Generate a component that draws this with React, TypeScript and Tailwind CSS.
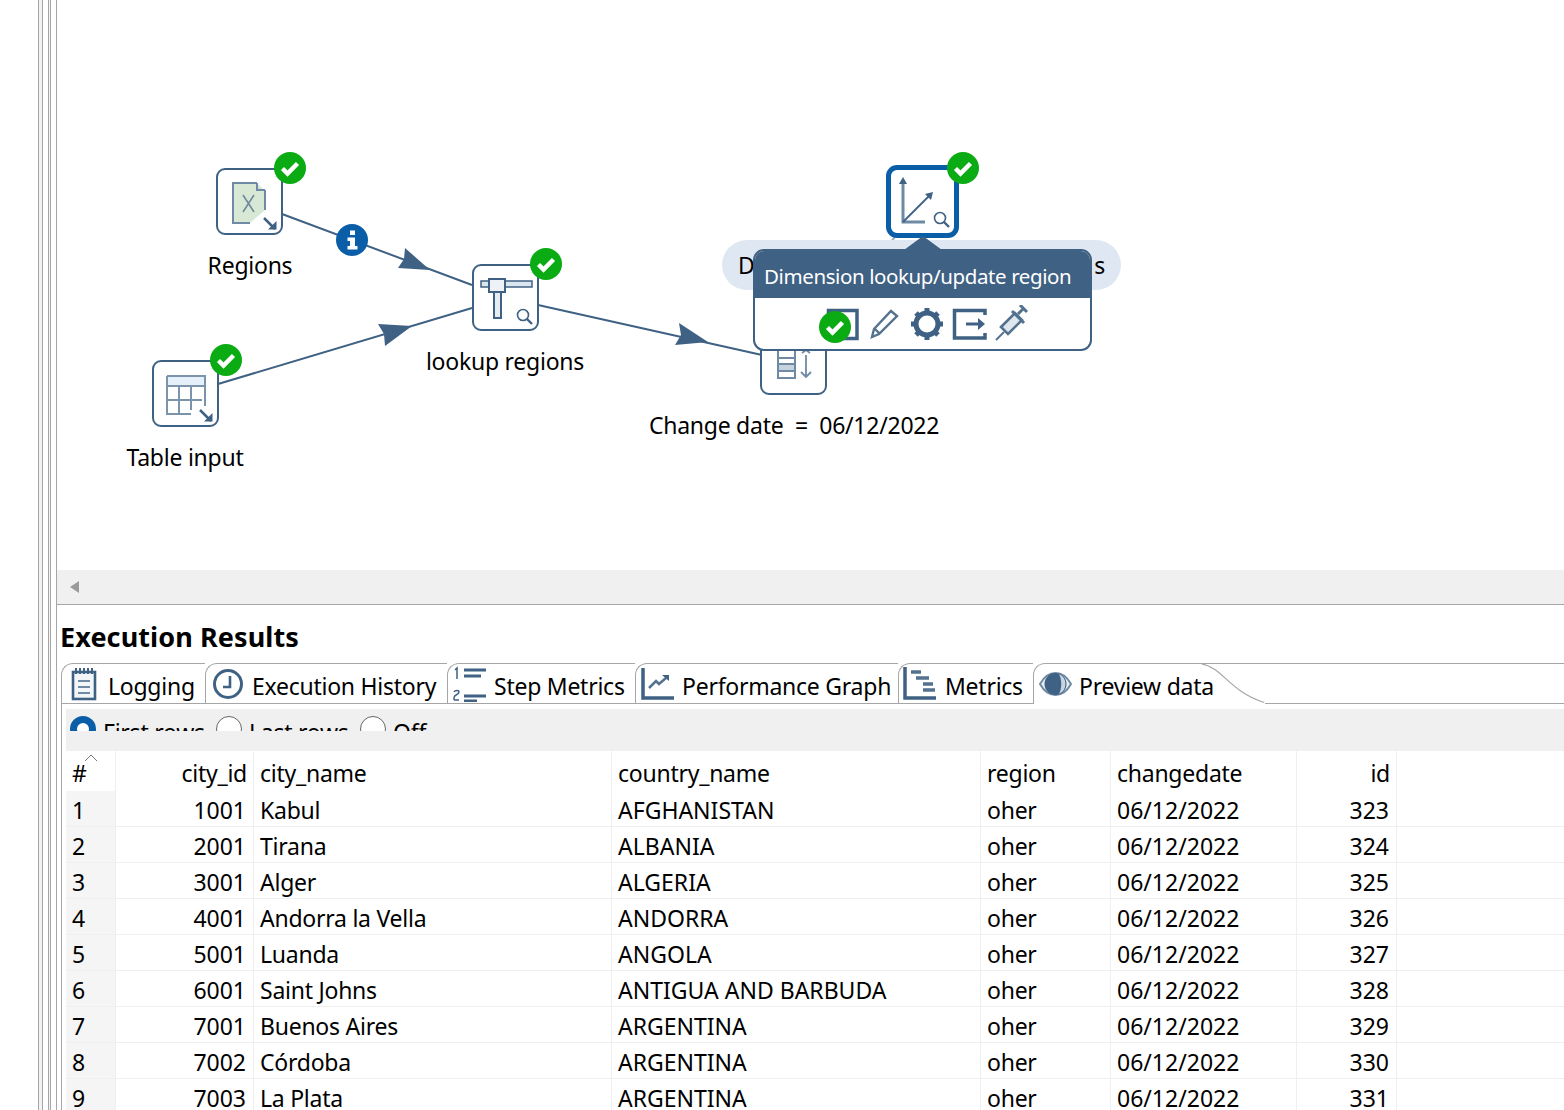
const BLUE = "#3f6183";

const rows = [
  ["1", "1001", "Kabul", "AFGHANISTAN", "323"],
  ["2", "2001", "Tirana", "ALBANIA", "324"],
  ["3", "3001", "Alger", "ALGERIA", "325"],
  ["4", "4001", "Andorra la Vella", "ANDORRA", "326"],
  ["5", "5001", "Luanda", "ANGOLA", "327"],
  ["6", "6001", "Saint Johns", "ANTIGUA AND BARBUDA", "328"],
  ["7", "7001", "Buenos Aires", "ARGENTINA", "329"],
  ["8", "7002", "Córdoba", "ARGENTINA", "330"],
  ["9", "7003", "La Plata", "ARGENTINA", "331"],
];

const gridCls = "grid grid-cols-[50px_138px_358px_369px_130px_186px_100px_1fr]";
const cellCls = "px-[6px] border-r border-[#efefef] whitespace-nowrap";
const digitCls = "tracking-normal";

function Check({ x, y }: { x: number; y: number }) {
  return (
    <svg className="absolute" style={{ left: x - 16, top: y - 16 }} width="32" height="32" viewBox="0 0 32 32">
      <circle cx="16" cy="16" r="16" fill="#0bab13" />
      <path d="M8.500 16.500l5 5 10-10" fill="none" stroke="#fff" strokeWidth="4.500" />
    </svg>
  );
}

function Node({ x, y, children }: { x: number; y: number; children: React.ReactNode }) {
  return (
    <div className="absolute w-[67px] h-[67px] bg-white border-2 border-[#3f6183] rounded-[9px]" style={{ left: x, top: y }}>
      <svg className="absolute -left-[2px] -top-[2px]" width="67" height="67" viewBox="0 0 67 67">
        {children}
      </svg>
    </div>
  );
}

function Label({ x, y, text }: { x: number; y: number; text: string }) {
  return (
    <div className="absolute -translate-x-1/2 whitespace-pre text-black leading-[32px]" style={{ left: x, top: y }}>
      {text}
    </div>
  );
}

function InputArrow() {
  return (
    <g stroke={BLUE} fill="none">
      <path d="M48 50l11 11" strokeWidth="2.500" />
      <path d="M52 61.500h8.500V53z" fill={BLUE} stroke="none" />
    </g>
  );
}

function Lens({ cx, cy }: { cx: number; cy: number }) {
  return (
    <g fill="none" stroke={BLUE}>
      <circle cx={cx} cy={cy} r="5.500" strokeWidth="1.600" />
      <path d={`M${cx + 4} ${cy + 4}l5 5`} strokeWidth="2.400" />
    </g>
  );
}

function Canvas() {
  return (
    <div className="relative h-[570px] overflow-hidden">
      <svg className="absolute left-[-57px] top-0" width="1564" height="570" viewBox="0 0 1564 570">
        <path d="M282 214L472 285M218 384L472 308M538 305L762 355" stroke={BLUE} strokeWidth="2" fill="none" />
        <path d="M430 270L398 268L404 259L405 248z" fill={BLUE} />
        <path d="M412 326L378 324L384 334L385 346z" fill={BLUE} />
        <path d="M708 342L675 345L681 335L679 323z" fill={BLUE} />
        <path d="M895 237L884 250" stroke="#9fb0c0" strokeWidth="2" />
      </svg>
      <div className="absolute left-[-57px] top-0 w-[1564px] h-[570px]">
        <svg className="absolute left-[336px] top-[224px]" width="32" height="32" viewBox="0 0 32 32">
          <circle cx="16" cy="16" r="16" fill="#0a5ea8" />
          <rect x="14" y="6.500" width="5" height="4.500" fill="#fff" />
          <path d="M11.500 13.500H19V22h2.500v3.500h-10V22H14v-5h-2.500z" fill="#fff" />
        </svg>

        <Node x={216} y={168}>
          <path d="M17 15H41L49 23V42L34 55H17z" fill="#d7e9d5" />
          <path d="M49 22V42M41 15V22H49M41 15H17V55H34" fill="none" stroke="#6f8aa5" strokeWidth="2" />
          <path d="M27 27L38 44M38 27L27 44" stroke="#71899f" strokeWidth="1.600" />
          <InputArrow />
        </Node>
        <Node x={472} y={264}>
          <rect x="9" y="17" width="51" height="6" fill="#dce6ee" stroke={BLUE} strokeWidth="1.500" />
          <rect x="22" y="28" width="7" height="26" fill="#e5ecf2" stroke={BLUE} strokeWidth="2" />
          <rect x="17" y="15" width="16" height="13" fill="#eef2f6" stroke={BLUE} strokeWidth="2" />
          <Lens cx={51} cy={51} />
        </Node>
        <Node x={152} y={360}>
          <rect x="15" y="16" width="38" height="10" fill="#e6f0fa" />
          <path d="M15 16H53V46M15 16V54H39M15 26H53M15 40H50M27 26V54M39 26V50" fill="none" stroke="#7c94ab" strokeWidth="2" />
          <InputArrow />
        </Node>
        <Node x={760} y={328}>
          <path d="M18 22H35V50H18zM18 30H35M18 36H35M18 43H35" fill="#fff" stroke="#6f8aa5" strokeWidth="2" />
          <rect x="19" y="37" width="15" height="5" fill="#c5d3df" />
          <path d="M46 27V49M41 44l5 5 5-5M42 25l4-3 4 3" fill="none" stroke="#6f8aa5" strokeWidth="1.800" />
        </Node>

        <div className="absolute left-[722px] top-[240px] w-[399px] h-[50px] rounded-[25px] bg-[#dfe8f2] flex items-center justify-between px-[16px] leading-[32px] text-black">
          <span>D</span>
          <span>s</span>
        </div>

        <div className="absolute left-[886px] top-[165px] w-[73px] h-[73px] bg-white border-[5px] border-[#0a5ea8] rounded-[11px]">
          <svg className="absolute -left-[5px] -top-[5px]" width="73" height="73" viewBox="0 0 73 73">
            <path d="M17 15V57H39" fill="none" stroke="#6f8aa5" strokeWidth="3" />
            <path d="M17 12l-4 7h8z" fill={BLUE} />
            <path d="M17 57L44 30" stroke={BLUE} strokeWidth="1.800" />
            <path d="M47 27l-8 2 6 6z" fill={BLUE} />
            <Lens cx={54} cy={53} />
          </svg>
        </div>

        <Check x={290} y={168} />
        <Check x={546} y={264} />
        <Check x={226} y={360} />
        <Check x={963} y={168} />

        <Label x={250} y={249} text="Regions" />
        <Label x={505} y={345} text="lookup regions" />
        <Label x={185} y={441} text="Table input" />
        <Label x={794} y={409} text="Change date  =  06/12/2022" />

        <div className="absolute left-[904px] top-[236px] w-0 h-0 border-x-[19px] border-x-transparent border-b-[14px] border-b-[#3f6183]" />
        <div className="absolute left-[753px] top-[249px] w-[339px] h-[102px] bg-white border-2 border-[#3f6183] rounded-[11px] overflow-hidden">
          <div className="h-[47px] bg-[#3f6183] text-white text-[20.5px] tracking-[-0.4px] pl-[9px] pt-[9px] leading-[32px] whitespace-nowrap">
            Dimension lookup/update region
          </div>
        </div>
        <PopupIcons />
        <Check x={835} y={327} />
      </div>
    </div>
  );
}

function PopupIcons() {
  return (
    <svg className="absolute left-[820px] top-[305px]" width="215" height="38" viewBox="820 305 215 38" fill="none">
      <path d="M828.500 310.500H857V338.500H828.500z" stroke={BLUE} strokeWidth="3.500" />
      <path d="M872 337l2-8 17-18 6 5-18 18zM875 329l5 5" stroke="#54728f" strokeWidth="2.400" />
      <circle cx="927" cy="324" r="11" stroke={BLUE} strokeWidth="5" />
      <path d="M927 308v5M927 335v5M911 324h5M938 324h5M916 313l3 3M935 332l3 3M916 335l3-3M935 316l3-3" stroke={BLUE} strokeWidth="5" />
      <path d="M985 315V310.500H954.500V338H985V333" stroke={BLUE} strokeWidth="3.500" />
      <path d="M966 324H980" stroke={BLUE} strokeWidth="3" />
      <path d="M978 318l7 6-7 6z" fill={BLUE} />
      <path d="M996 340l8-8" stroke="#54728f" strokeWidth="2" />
      <path d="M1001 327l14-14 7 7-14 14z" fill="#dfe7ee" stroke="#54728f" strokeWidth="2.600" />
      <path d="M1012 311l12 12M1018 314l6-6M1020 305l7 7" stroke="#54728f" strokeWidth="3" />
    </svg>
  );
}

const tabIcons = {
  logging: (
    <svg className="shrink-0" width="26" height="34" viewBox="0 0 26 34" fill="none">
      <rect x="2" y="5" width="22" height="27" fill="#f3f6f8" stroke={BLUE} strokeWidth="2.600" />
      <path d="M5 1v6M9 1v6M13 1v6M17 1v6M21 1v6" stroke={BLUE} strokeWidth="2" />
      <path d="M7 14h12M7 20h12M7 26h12" stroke="#6f8aa5" strokeWidth="2" />
    </svg>
  ),
  history: (
    <svg className="shrink-0" width="32" height="32" viewBox="0 0 32 32" fill="none">
      <circle cx="16" cy="16" r="13.500" fill="#fff" stroke={BLUE} strokeWidth="3" />
      <path d="M18 8V19H11" stroke={BLUE} strokeWidth="2.600" />
    </svg>
  ),
  steps: (
    <svg className="shrink-0" width="33" height="36" viewBox="0 0 33 36" fill="none">
      <path d="M2 4l2-2V13M1 34V32c0-4 5-3 5-6 0-2-4-2-5 0M1 34h5" stroke={BLUE} strokeWidth="1.500" />
      <path d="M11 4H33M11 10H28M11 30H33M11 35H24" stroke={BLUE} strokeWidth="3" />
    </svg>
  ),
  perf: (
    <svg className="shrink-0" width="33" height="32" viewBox="0 0 33 32" fill="none">
      <path d="M2 0V30H33" stroke={BLUE} strokeWidth="3.500" />
      <path d="M8 20l7-7 3 3 7-6" stroke="#54728f" strokeWidth="2.500" />
      <path d="M21 7h7v6z" fill={BLUE} />
    </svg>
  ),
  metrics: (
    <svg className="shrink-0" width="33" height="33" viewBox="0 0 33 33" fill="none">
      <path d="M2 0V31H33" stroke={BLUE} strokeWidth="3.500" />
      <path d="M8 5H18M13 11H26M20 17H30M20 23H32" stroke="#54728f" strokeWidth="3.500" />
    </svg>
  ),
  eye: (
    <svg className="shrink-0" width="33" height="24" viewBox="0 0 33 24" fill="none">
      <path d="M1 12C6 3 11 1 16.500 1S27 3 32 12C27 21 22 23 16.500 23S6 21 1 12z" fill="#e9eef3" stroke="#6f8aa5" strokeWidth="2" />
      <circle cx="16.500" cy="12" r="11" fill={BLUE} />
      <path d="M20 2a11 11 0 0 1 0 20c3-6 3-14 0-20z" fill="#c8d5e0" />
    </svg>
  ),
};

const tabs = [
  { name: "Logging", icon: tabIcons.logging, width: "w-[144px]", gap: "pl-[9px] gap-[11px]" },
  { name: "Execution History", icon: tabIcons.history, width: "w-[242px]", gap: "pl-[6px] gap-[8px]" },
  { name: "Step Metrics", icon: tabIcons.steps, width: "w-[188px]", gap: "pl-[5px] gap-[8px]" },
  { name: "Performance Graph", icon: tabIcons.perf, width: "w-[263px]", gap: "pl-[5px] gap-[8px]" },
  { name: "Metrics", icon: tabIcons.metrics, width: "w-[135px]", gap: "pl-[4px] gap-[9px]" },
];

function TabBar() {
  return (
    <div className="flex h-[41px]">
      {tabs.map((t) => (
        <div key={t.name} className={`${t.width} ${t.gap} flex items-center h-full border-t border-b border-l border-[#a6a6a6] rounded-tl-[12px] whitespace-nowrap`}>
          {t.icon}
          <span className="mt-[5px]">{t.name}</span>
        </div>
      ))}
      <div className="w-[168px] h-full pl-[5px] flex items-center gap-[7px] border-t border-l border-[#a6a6a6] rounded-tl-[12px] bg-white whitespace-nowrap">
        {tabIcons.eye}
        <span className="mt-[5px]">Preview data</span>
      </div>
      <svg width="64" height="41" viewBox="0 0 64 41" fill="none" className="shrink-0 border-t border-[#a6a6a6]">
        <path d="M0 0C22 4 28 28 64 39.500" stroke="#a6a6a6" strokeWidth="1.200" />
      </svg>
      <div className="flex-1 h-full border-t border-b border-[#a6a6a6]" />
    </div>
  );
}

function Radios() {
  return (
    <div className="h-[42px] bg-[#f0f0f0] pl-[4px]">
      <div className="h-[22px] overflow-hidden flex gap-[7px] pt-[7px] leading-[32px] text-black">
        <span className="w-[26px] h-[26px] rounded-full border-[7px] border-[#0a5ea8] bg-white shrink-0" />
        <span className="w-[106px] whitespace-nowrap">First rows</span>
        <span className="w-[26px] h-[26px] rounded-full border border-[#666] bg-white shrink-0" />
        <span className="w-[104px] whitespace-nowrap">Last rows</span>
        <span className="w-[26px] h-[26px] rounded-full border border-[#666] bg-white shrink-0" />
        <span className="whitespace-nowrap">Off</span>
      </div>
    </div>
  );
}

function PreviewTable() {
  return (
    <div className="leading-[32px] text-black">
      <div className={`${gridCls} h-[40px] items-stretch`}>
        <div className={`${cellCls} pt-[6px] relative`}>
          #
          <svg className="absolute left-[18px] top-[2px]" width="14" height="10" viewBox="0 0 14 10" fill="none">
            <path d="M1 8l6-6 6 6" stroke="#777" strokeWidth="1" />
          </svg>
        </div>
        <div className={`${cellCls} pt-[6px] text-right`}>city_id</div>
        <div className={`${cellCls} pt-[6px]`}>city_name</div>
        <div className={`${cellCls} pt-[6px]`}>country_name</div>
        <div className={`${cellCls} pt-[6px]`}>region</div>
        <div className={`${cellCls} pt-[6px]`}>changedate</div>
        <div className={`${cellCls} pt-[6px] text-right`}>id</div>
        <div />
      </div>
      {rows.map((r) => (
        <div key={r[0]} className={`${gridCls} h-[36px] border-b border-[#efefef]`}>
          <div className={`${cellCls} ${digitCls} bg-[#f5f5f5] pt-[3px]`}>{r[0]}</div>
          <div className={`${cellCls} ${digitCls} pt-[3px] text-right pr-[7px]`}>{r[1]}</div>
          <div className={`${cellCls} pt-[3px]`}>{r[2]}</div>
          <div className={`${cellCls} ${digitCls} pt-[3px]`}>{r[3]}</div>
          <div className={`${cellCls} pt-[3px]`}>oher</div>
          <div className={`${cellCls} ${digitCls} pt-[3px]`}>06/12/2022</div>
          <div className={`${cellCls} ${digitCls} pt-[3px] text-right pr-[7px]`}>{r[4]}</div>
          <div />
        </div>
      ))}
    </div>
  );
}

export default function App() {
  return (
    <div className="h-[1110px] overflow-hidden flex bg-white text-[23px] tracking-[-0.25px] text-black font-['Noto_Sans','Open_Sans',sans-serif]">
      <div className="w-[38px] shrink-0" />
      {/* sash between the tree and the work area */}
      <div className="w-[18px] shrink-0 flex">
        <div className="w-[5px] bg-[#f2f2f2] border-x border-[#a6a6a6]" />
        <div className="w-[5px]" />
        <div className="w-[3px] bg-[#f2f2f2] border-x border-[#a6a6a6]" />
      </div>
      <div className="flex-1 min-w-0 flex flex-col border-l border-[#a6a6a6]">
        <Canvas />
        <div className="h-[35px] bg-[#f0f0f0] border-b border-[#a6a6a6] flex items-center pl-[13px] shrink-0">
          <span className="w-0 h-0 border-y-[6px] border-y-transparent border-r-[9px] border-r-[#9a9a9a]" />
        </div>
        <h2 className="h-[58px] flex items-center pl-[3px] pt-[4px] text-[27px] tracking-[0.1px] font-bold leading-none shrink-0">Execution Results</h2>
        <div className="ml-[4px] flex-1 min-h-0">
          <TabBar />
          <div className="pl-[4px] pt-[5px] border-l border-[#a6a6a6] h-full">
            <Radios />
            <PreviewTable />
          </div>
        </div>
      </div>
    </div>
  );
}
